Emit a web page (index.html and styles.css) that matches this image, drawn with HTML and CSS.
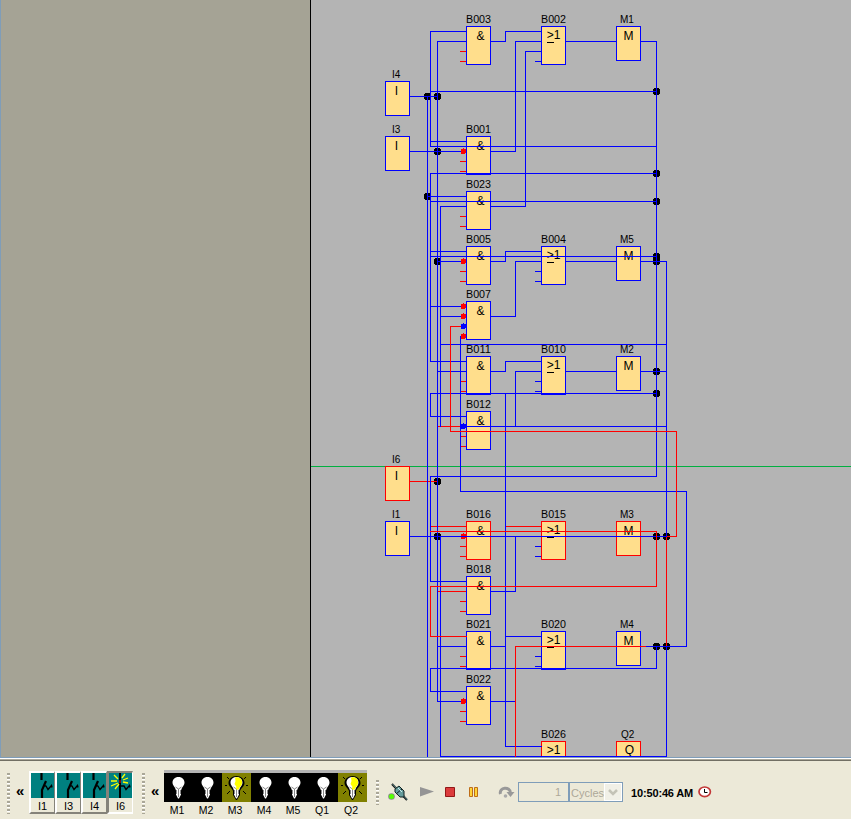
FILE: index.html
```html
<!DOCTYPE html>
<html lang="en">
<head>
<meta charset="utf-8">
<title>Circuit simulation</title>
<link rel="stylesheet" href="styles.css">
</head>
<body>
<main class="workspace">
<aside class="side"></aside>
<svg class="diagram" viewBox="311 0 540 757" width="540" height="757">
<defs>
<path id="pin" d="M461 -2h2v-1h1v1h2v4h-1v1h-4z" stroke="none"/>
<path id="dot" d="M-2 -3h5v1h1v5h-1v1h-5v-1h-1v-5h1z"/>
</defs>
<path d="M311 466.500H851" stroke="#00b040"/>
<g class="blocks" transform="translate(.5 .5)">
<path class="blue" d="M466 26h24v38h-24zM541 26h24v38h-24zM616 26h24v34h-24zM385 81h24v34h-24zM385 136h24v34h-24zM466 136h24v38h-24zM466 191h24v38h-24zM466 246h24v38h-24zM541 246h24v38h-24zM616 246h24v34h-24zM466 301h24v38h-24zM466 356h24v38h-24zM541 356h24v38h-24zM616 356h24v34h-24zM466 411h24v38h-24zM385 521h24v34h-24zM466 576h24v38h-24zM466 631h24v38h-24zM541 631h24v38h-24zM616 631h24v34h-24zM466 686h24v38h-24z"/>
<path class="red" d="M385 466h24v34h-24zM466 521h24v38h-24zM541 521h24v38h-24zM616 521h24v34h-24zM541 741h24v38h-24zM616 741h24v34h-24z"/>
</g>
<g class="sym">
<text x="480.500" y="40">&amp;</text><text x="480.500" y="150">&amp;</text><text x="480.500" y="205">&amp;</text><text x="480.500" y="260">&amp;</text><text x="480.500" y="315">&amp;</text><text x="480.500" y="370">&amp;</text><text x="480.500" y="425">&amp;</text><text x="480.500" y="535">&amp;</text><text x="480.500" y="590">&amp;</text><text x="480.500" y="645">&amp;</text><text x="480.500" y="700">&amp;</text>
<text x="553.500" y="39">&gt;1</text><text x="553.500" y="259">&gt;1</text><text x="553.500" y="369">&gt;1</text><text x="553.500" y="534">&gt;1</text><text x="553.500" y="644">&gt;1</text><text x="553.500" y="754">&gt;1</text>
<text x="628.500" y="40">M</text><text x="628.500" y="260">M</text><text x="628.500" y="370">M</text><text x="628.500" y="535">M</text><text x="628.500" y="645">M</text><text x="629.500" y="754">Q</text>
<text x="396.500" y="95">I</text><text x="396.500" y="150">I</text><text x="396.500" y="480">I</text><text x="396.500" y="535">I</text>
</g>
<path class="bar" d="M547 42.500h7M547 262.500h7M547 372.500h7M547 537.500h7M547 647.500h7"/>
<g class="label">
<text x="466" y="23" textLength="25" lengthAdjust="spacingAndGlyphs">B003</text><text x="541" y="23" textLength="25" lengthAdjust="spacingAndGlyphs">B002</text><text x="620" y="23">M1</text>
<text x="392" y="78">I4</text><text x="392" y="133">I3</text>
<text x="466" y="133" textLength="25" lengthAdjust="spacingAndGlyphs">B001</text><text x="466" y="188" textLength="25" lengthAdjust="spacingAndGlyphs">B023</text>
<text x="466" y="243" textLength="25" lengthAdjust="spacingAndGlyphs">B005</text><text x="541" y="243" textLength="25" lengthAdjust="spacingAndGlyphs">B004</text><text x="620" y="243">M5</text>
<text x="466" y="298" textLength="25" lengthAdjust="spacingAndGlyphs">B007</text>
<text x="466" y="353" textLength="25" lengthAdjust="spacingAndGlyphs">B011</text><text x="541" y="353" textLength="25" lengthAdjust="spacingAndGlyphs">B010</text><text x="620" y="353">M2</text>
<text x="466" y="408" textLength="25" lengthAdjust="spacingAndGlyphs">B012</text><text x="392" y="463">I6</text><text x="392" y="518">I1</text>
<text x="466" y="518" textLength="25" lengthAdjust="spacingAndGlyphs">B016</text><text x="541" y="518" textLength="25" lengthAdjust="spacingAndGlyphs">B015</text><text x="620" y="518">M3</text>
<text x="466" y="573" textLength="25" lengthAdjust="spacingAndGlyphs">B018</text>
<text x="466" y="628" textLength="25" lengthAdjust="spacingAndGlyphs">B021</text><text x="541" y="628" textLength="25" lengthAdjust="spacingAndGlyphs">B020</text><text x="620" y="628">M4</text>
<text x="466" y="683" textLength="25" lengthAdjust="spacingAndGlyphs">B022</text><text x="541" y="738" textLength="25" lengthAdjust="spacingAndGlyphs">B026</text><text x="621" y="738">Q2</text>
</g>
<g class="dots">
<use href="#dot" x="427" y="96"/><use href="#dot" x="437" y="96"/><use href="#dot" x="656" y="91"/>
<use href="#dot" x="437" y="151"/><use href="#dot" x="656" y="173"/><use href="#dot" x="656" y="201"/><use href="#dot" x="427" y="196"/>
<use href="#dot" x="437" y="261"/><use href="#dot" x="656" y="256"/><use href="#dot" x="656" y="261"/>
<use href="#dot" x="656" y="371"/><use href="#dot" x="656" y="393"/><use href="#dot" x="437" y="481"/>
<use href="#dot" x="437" y="536"/><use href="#dot" x="656" y="536"/><use href="#dot" x="666" y="536"/>
<use href="#dot" x="656" y="646"/><use href="#dot" x="666" y="646"/>
</g>
<use href="#pin" y="536" fill="#f00"/>
<g class="wires" transform="translate(.5 .5)">
<path class="red" d="M460 51h5M460 61h5M460 161h5M460 171h5M460 216h5M460 226h5M460 271h5M460 281h5M460 381h5M460 391h5M460 436h5M460 446h5M460 546h5M460 556h5M460 601h5M460 611h5M460 656h5M460 666h5M460 711h5M460 721h5M409 481H436M437 426H463M430 526H465M505 526H540M437 591H465"/>
<path class="blue" d="M535 61h5M535 271h5M535 281h5M535 381h5M535 391h5M535 546h5M535 556h5M535 656h5M535 666h5
M466 31H430V146H656M466 41H437V701H466M490 41H505V31H541M541 41H515V151H490M541 51H525V206H490M565 41H616M640 41H656V476H430V581H466M430 91H656M409 96H437M427 96V756M409 151H466M430 141H466
M656 173H430V361H466M427 196H466M430 201H656M466 206H440V426M430 251H466M430 256H656M437 261H466M490 261H505V251H541M541 261H515V316H490M565 261H616M640 261H666V536M430 306H466M440 316H466M460 336V491H686V646H646M440 344H666
M437 371H466M490 371H505V361H541M541 371H515V426M565 371H616M640 371H666M656 393H430V416H466M463 426H666M505 393V746H541
M409 536H666M440 536V756H666V646M515 536V591H490M437 646H466M490 646H505M505 636H541M656 646V668H430V691H466M490 701H515"/>
<path class="red" d="M463 326H450V431H676V536H667M430 531H656V586H430V636H466M666 537V645M645 646H515V756"/>
</g>
<g fill="#f00"><use href="#pin" y="151"/><use href="#pin" y="261"/><use href="#pin" y="306"/><use href="#pin" y="316"/><use href="#pin" y="336"/><use href="#pin" y="701"/></g>
<g fill="#00f"><use href="#pin" y="326"/><use href="#pin" y="426"/></g>
</svg>
</main>
<footer class="toolbar">
<svg class="symbols" width="0" height="0"><defs>
<g id="switch"><path fill="none" stroke="#000" stroke-width="2.200" d="M10.500 0v7M15 8l-4 9v8"/><path fill="none" stroke="#000" stroke-width="1.400" d="M13 12.500l2 .5 2 3.500 3.500-4 .5 2"/></g>
<g id="bulb"><path fill="#fff" d="M14.500 4c3.800 0 6 2.500 6 5.500 0 3-2.500 4-3.500 8v4l-2 4h-1l-2-4v-4c-1-4-3.500-5-3.500-8 0-3 2.200-5.500 6-5.500z"/><path fill="none" stroke="#888" d="M11.500 14l3 2 3-2M14.500 16v8M12.500 17v4M16.500 17v4"/></g>
<g id="lit"><path d="M14.500 3c4.500 0 8 3 8 7 0 3.500-3.500 5-4.500 8v4l-3 5h-1l-3-5v-4c-1-3-4.500-4.500-4.500-8 0-4 3.500-7 8-7z"/><use href="#bulb"/><path fill="#ff0" d="M13 4.500c5-1 7.500 2 7 5.500 0 3-3 4-3.500 7l-3-1 1-2-2-3 1-3z"/><path fill="none" stroke="#000" d="M5 4l2 2M24 4l-2 2M3 12.500h2M24 12.500h2M5 21l3-3M24 21l-3-3"/></g>
</defs></svg>
<i class="grip"></i>
<span class="chev">«</span>
<div class="switches">
<div class="switch"><svg width="23" height="25"><use href="#switch"/></svg><span>I1</span></div>
<div class="switch"><svg width="23" height="25"><use href="#switch"/></svg><span>I3</span></div>
<div class="switch"><svg width="23" height="25"><use href="#switch"/></svg><span>I4</span></div>
<div class="switch on"><svg width="23" height="25"><path fill="none" stroke="#000" stroke-width="2" d="M11 0v26"/><path fill="none" stroke="#000" stroke-width="1.400" d="M12 13l3 0 2 3.500 3.500-4 .5 2"/><path fill="none" stroke="#ff0" stroke-width="1.300" d="M9 6L5 2M8 8H2M9 10l-7 3M10 11l-4 5M13 5l3-4M14 7l5-2M14 9l5 1"/><path stroke="#f00" d="M11 7v3"/></svg><span>I6</span></div>
</div>
<i class="grip second"></i>
<span class="chev">«</span>
<div class="lamps">
<div class="lamp"><svg width="29" height="29"><use href="#bulb"/></svg><span>M1</span></div>
<div class="lamp"><svg width="29" height="29"><use href="#bulb"/></svg><span>M2</span></div>
<div class="lamp on"><svg width="29" height="29"><use href="#lit"/></svg><span>M3</span></div>
<div class="lamp"><svg width="29" height="29"><use href="#bulb"/></svg><span>M4</span></div>
<div class="lamp"><svg width="29" height="29"><use href="#bulb"/></svg><span>M5</span></div>
<div class="lamp"><svg width="29" height="29"><use href="#bulb"/></svg><span>Q1</span></div>
<div class="lamp on"><svg width="29" height="29"><use href="#lit"/></svg><span>Q2</span></div>
</div>
<i class="grip short"></i>
<svg class="controls" width="130" height="20" viewBox="386 782 130 20">
<path d="M392 784l15 16" stroke="#111" stroke-width="2"/><path d="M392.500 784l15 16" stroke="#8cc" stroke-width=".7"/>
<path d="M395 789l4-3 5 5v6h-4l-5-5z" fill="#659c9c" stroke="#122"/><path d="M396 794l6-5" stroke="#122"/><path d="M398 788l4 4" stroke="#cee"/>
<circle cx="391.500" cy="796.500" r="3.300" fill="#888"/><circle cx="391.500" cy="796.500" r="2.500" fill="#5f0"/>
<path d="M420 787l14 4.500-14 5z" fill="#959595"/>
<path d="M445.500 787.500h9v9h-9z" fill="#dc3c3c" stroke="#921818"/>
<path d="M469.500 787.500h3v9h-3zM474.500 787.500h3v9h-3z" fill="#ffd436" stroke="#bd6c18"/>
<path d="M500.500 794c-2-7 10-8 10-1" fill="none" stroke="#999" stroke-width="3"/><path d="M506.500 792h8l-4 5z" fill="#999"/><circle cx="505.500" cy="796" r="1.800" fill="#aaa"/>
</svg>
<div class="count">1</div>
<div class="combo"><span>Cycles</span><b><svg width="16" height="18"><path d="M4 6l4 4 4-4" fill="none" stroke="#c4c3b7" stroke-width="2.500"/></svg></b></div>
<span class="time">10:50:46 AM</span>
<svg class="clock" width="14" height="12"><ellipse cx="6.700" cy="5.800" rx="5.700" ry="4.800" fill="#fff" stroke="#c33838" stroke-width="1.700"/><path d="M6.500 3v3.500h3" fill="none" stroke="#000"/></svg>
</footer>
</body>
</html>
```
FILE: styles.css
```css
* { box-sizing: border-box; }
body { margin: 0; width: 851px; height: 819px; overflow: hidden; background: #ece9d8; font-family: "Liberation Sans", Arial, sans-serif; font-size: 11px; color: #000; }
.workspace { display: flex; height: 757px; }
.side { width: 311px; background: #a5a395; border-left: 1px solid #7f9db9; border-right: 1px solid #000; }
.diagram { display: block; background: #b4b4b4; }
.blocks { fill: #ffde8c; shape-rendering: crispEdges; }
.wires { fill: none; stroke-linecap: square; shape-rendering: crispEdges; }
.blue { stroke: #00f; }
.red { stroke: #f00; }
.bar { stroke: #000; shape-rendering: crispEdges; }
.dots { shape-rendering: crispEdges; }
.label text { font-size: 10px; }
.sym text { font-size: 12px; text-anchor: middle; }
.toolbar { display: flex; align-items: flex-start; height: 62px; padding: 10px 0 0 7px; border-top: 1px solid #7f9db9; background: linear-gradient(#fff 0 1px, #aca899 1px 2px, #716f64 2px 3px, #ece9d8 3px); }
.symbols { position: absolute; }
.grip { width: 3px; height: 41px; margin-top: 5px; background: repeating-linear-gradient(#aaa798 0 2px, #fff 2px 3px, #ece9d8 3px 4px); }
.chev { width: 19px; padding-left: 6px; margin-top: 14px; font-size: 15px; font-weight: bold; line-height: 18px; }
.switches { display: flex; margin-top: 3px; }
.switch { width: 26px; height: 43px; border: 2px solid; border-color: #fff #85837a #85837a #fff; border-right-width: 1px; text-align: center; }
.switch svg { display: block; background: #008080; }
.switch span { display: block; line-height: 16px; }
.switch.on { border-color: #85837a #fff #fff #85837a; }
.second { margin-left: 9px; }
.lamps { display: flex; margin-top: 2px; border-top: 3px solid #b4b4b4; }
.lamp { width: 29px; text-align: center; }
.lamp svg { display: block; background: #000; }
.lamp span { display: block; line-height: 17px; font-size: 10.500px; padding-right: 3px; }
.lamp.on svg { background: #808000; }
.short { height: 25px; margin: 12px 0 0 9px; }
.controls { margin: 14px 2px 0 7px; }
.count { width: 51px; height: 20px; margin-top: 14px; border: 1px solid #7f9db9; padding-right: 7px; line-height: 19px; text-align: right; color: #aca899; }
.combo { display: flex; width: 54px; height: 20px; margin-top: 14px; border: 1px solid #7f9db9; line-height: 20px; color: #aca899; }
.combo span { width: 35px; padding-left: 1px; }
.combo b { flex: 1; height: 18px; background: #f1f0e7; border: 1px solid #fff; }
.combo svg { display: block; }
.time { width: 67px; margin: 18px 0 0 8px; line-height: 14px; font-weight: bold; letter-spacing: -.15px; white-space: nowrap; }
.clock { margin-top: 18px; }
```
